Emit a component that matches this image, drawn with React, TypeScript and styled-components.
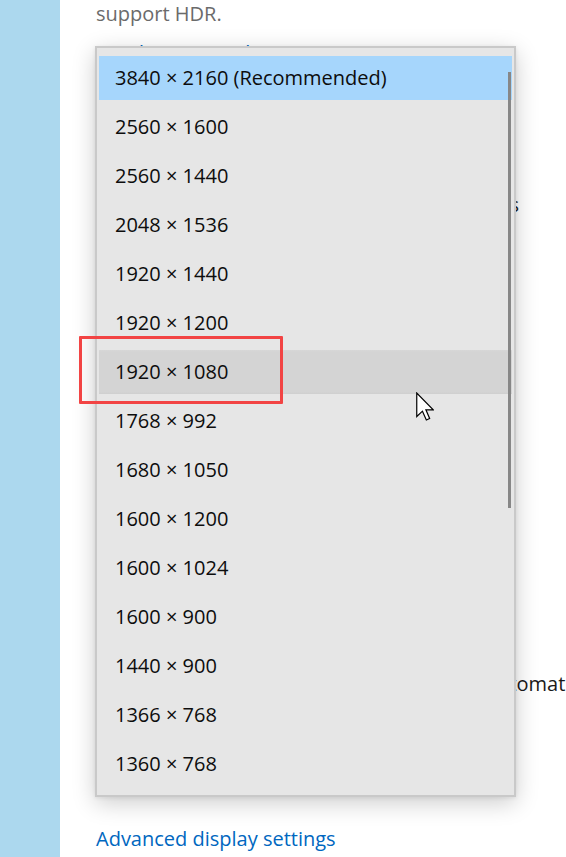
import React from 'react';
import styled, { createGlobalStyle } from 'styled-components';

const GlobalStyle = createGlobalStyle`
  html, body {
    margin: 0;
    padding: 0;
    background: #ffffff;
  }
  body {
    font-family: 'Open Sans', 'Noto Sans', 'Liberation Sans', sans-serif;
    overflow: hidden;
  }
`;

const resolutions = [
  '3840 × 2160 (Recommended)',
  '2560 × 1600',
  '2560 × 1440',
  '2048 × 1536',
  '1920 × 1440',
  '1920 × 1200',
  '1920 × 1080',
  '1768 × 992',
  '1680 × 1050',
  '1600 × 1200',
  '1600 × 1024',
  '1600 × 900',
  '1440 × 900',
  '1366 × 768',
  '1360 × 768'
];

const Page = styled.div`
  display: flex;
  width: 566px;
  height: 857px;
  overflow: hidden;
`;

const Sidebar = styled.aside`
  flex: none;
  width: 60px;
  background: #acd8ee;
`;

const Main = styled.main`
  position: relative;
  flex: 1;
  display: flex;
  flex-direction: column;
  padding-left: 36px;
  font-size: 20px;
  line-height: 28px;
  white-space: nowrap;
`;

const Note = styled.p`
  margin: 0;
  color: #6b6b6b;
`;

const Link = styled.a<{ $top: number }>`
  display: block;
  margin-top: ${(p) => p.$top}px;
  color: #0067c0;
  text-decoration: none;
`;

const SettingRow = styled.div<{ $top: number; $label: number }>`
  display: grid;
  grid-template-columns: ${(p) => p.$label}px auto;
  margin-top: ${(p) => p.$top}px;
  color: #1a1a1a;
`;

const Dropdown = styled.ul`
  position: absolute;
  left: 35px;
  top: 46px;
  width: 421px;
  height: 751px;
  margin: 0;
  padding: 8px 2px 9px;
  list-style: none;
  display: flex;
  flex-direction: column;
  gap: 5px;
  background: #e6e6e6;
  border: 2px solid #c9c9c9;
  box-sizing: border-box;
  box-shadow: 0 6px 22px rgba(0, 0, 0, 0.2), 0 1px 4px rgba(0, 0, 0, 0.08);
`;

const Option = styled.li<{ $state?: 'selected' | 'hover' }>`
  flex: none;
  height: 44px;
  display: flex;
  align-items: center;
  padding-left: 16px;
  color: #0d0d0d;
  background: ${(p) =>
    p.$state === 'selected'
      ? '#a6d6fc'
      : p.$state === 'hover'
      ? 'linear-gradient(to bottom, #d7d7d7 0, #d4d4d4 2px, #d4d4d4 calc(100% - 2px), #cfcfcf 100%)'
      : 'transparent'};
`;

const Scrollbar = styled.div`
  position: absolute;
  right: 3px;
  top: 24px;
  width: 3px;
  height: 436px;
  background: #878787;
`;

const Highlight = styled.div`
  position: absolute;
  left: 19px;
  top: 336px;
  width: 198px;
  height: 62px;
  border: 3px solid #f24444;
  border-radius: 1px;
`;

const Cursor = styled.svg`
  position: absolute;
  left: 356px;
  top: 392px;
`;

const App: React.FC = () => {
  return (
    <>
      <GlobalStyle />
      <Page>
        <Sidebar />
        <Main>
          <Note>support HDR.</Note>
          <Link $top={11} href="#">
            Windows HD Color settings
          </Link>
          <SettingRow $top={124} $label={378}>
            <span>Change the size of text,</span>
            <span>apps</span>
          </SettingRow>
          <SettingRow $top={451} $label={390}>
            <span>Display orientation</span>
            <span>automatic</span>
          </SettingRow>
          <Link $top={127} href="#">
            Advanced display settings
          </Link>

          <Dropdown>
            {resolutions.map((r, i) => (
              <Option
                key={r}
                $state={i === 0 ? 'selected' : i === 6 ? 'hover' : undefined}
              >
                {r}
              </Option>
            ))}
            <Scrollbar />
          </Dropdown>

          <Highlight />

          <Cursor width="18" height="29" viewBox="0 0 12 19">
            <path
              d="M0.5 0.5 L0.5 16.2 L4.3 12.6 L6.9 18.5 L9.1 17.5 L6.6 11.7 L11.5 11.7 Z"
              fill="#ffffff"
              stroke="#000000"
              strokeWidth="0.8"
              strokeLinejoin="miter"
            />
          </Cursor>
        </Main>
      </Page>
    </>
  );
};

export default App;
